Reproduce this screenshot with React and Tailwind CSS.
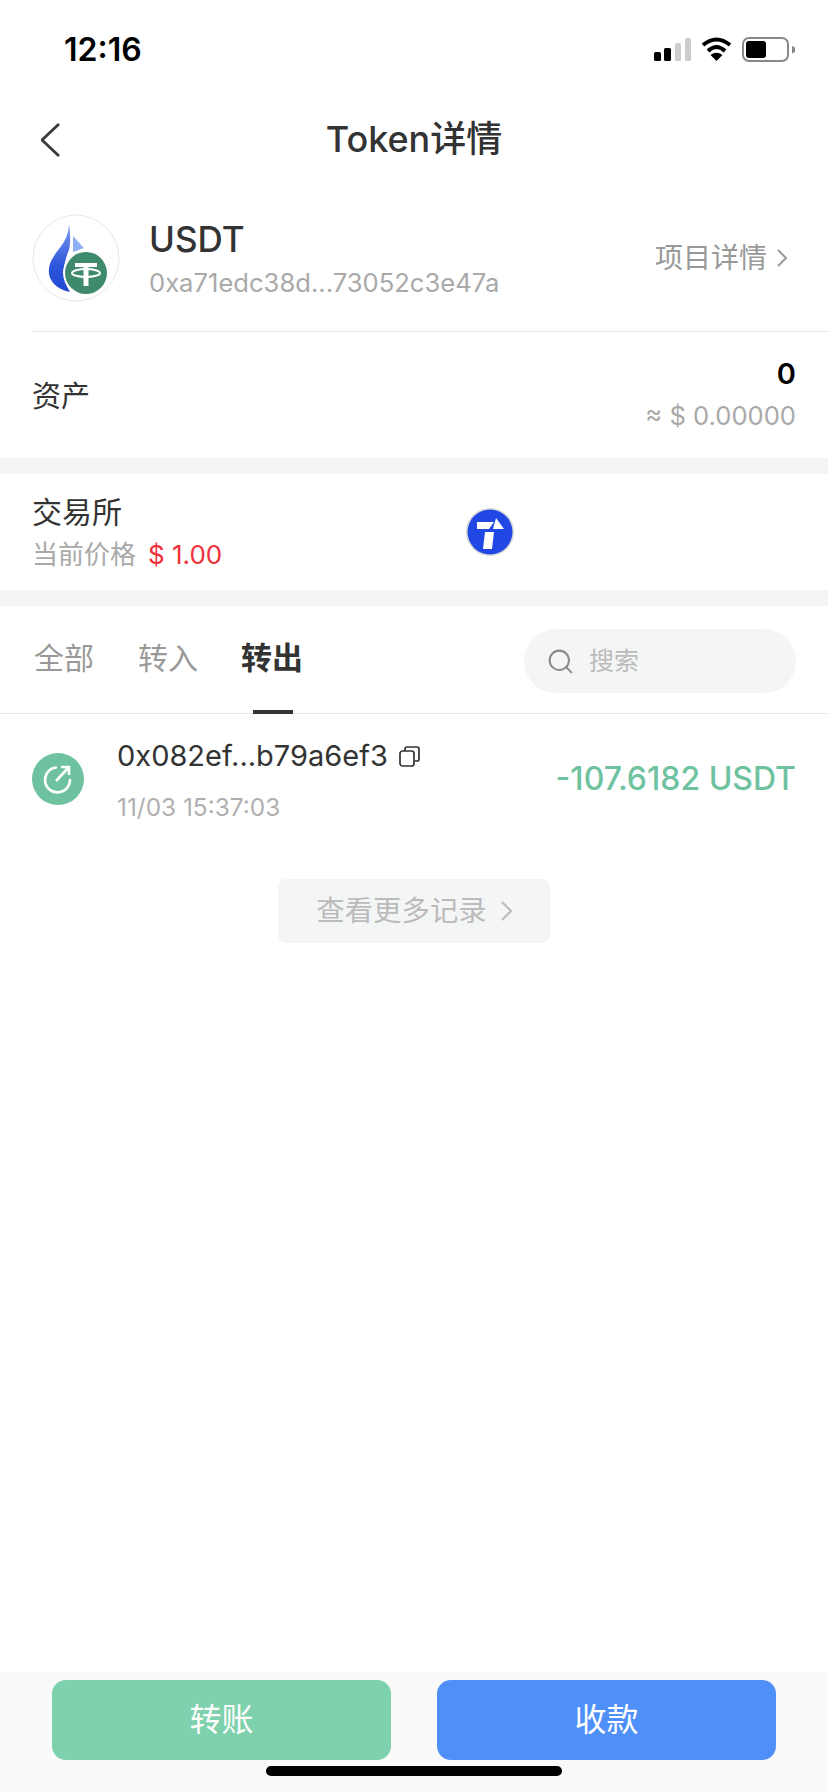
import { Search } from 'lucide-react';

const font = { fontFamily: 'Inter, "Noto Sans CJK SC", sans-serif' };

const Chevron = ({ w, h, color, stroke, flip, className }) => (
    <svg width={w} height={h} viewBox={`0 0 ${w} ${h}`} className={className}>
        <path
            d={flip
                ? `M${w - 1} 1 L1 ${h / 2} L${w - 1} ${h - 1}`
                : `M1 1 L${w - 1} ${h / 2} L1 ${h - 1}`}
            fill="none"
            stroke={color}
            strokeWidth={stroke}
        />
    </svg>
);

const StatusIcons = () => (
    <svg width="141" height="26" viewBox="0 0 141 26" className="mt-[37px]">
        {/* signal */}
        <rect x="0" y="15" width="7" height="9" rx="1.5" fill="#000" />
        <rect x="10" y="11" width="7" height="13" rx="1.5" fill="#000" />
        <rect x="21" y="6" width="6" height="18" rx="1.5" fill="#ccc" />
        <rect x="31" y="1" width="6" height="23" rx="1.5" fill="#ccc" />
        {/* wifi */}
        <path d="M49 8 Q62.5 -3 76 8" fill="none" stroke="#000" strokeWidth="4" />
        <path d="M54 14 Q62.5 6 71 14" fill="none" stroke="#000" strokeWidth="4" />
        <path d="M56.5 18 Q62.5 13.5 68.5 18 L62.5 24 Z" fill="#000" />
        {/* battery */}
        <rect x="89" y="1" width="45" height="23" rx="6" fill="none" stroke="#888" strokeWidth="2" />
        <rect x="92" y="4" width="20" height="17" rx="3" fill="#000" />
        <path d="M138 9 L141 10.5 V15 L138 16.5 Z" fill="#888" />
    </svg>
);

const TokenLogo = () => (
    <svg width="88" height="88" viewBox="0 0 88 88" className="shrink-0">
        <defs>
            <linearGradient id="drop" x1="0" y1="0" x2="0" y2="1">
                <stop offset="0" stopColor="#7d9cf0" />
                <stop offset="0.6" stopColor="#2f57dc" />
                <stop offset="1" stopColor="#1f47d0" />
            </linearGradient>
        </defs>
        <circle cx="44" cy="44" r="43" fill="#fff" stroke="#e8e8e8" strokeWidth="1" />
        <path d="M37 10 C36 26 30 30 22 42 C11 58 18 74 38 78 C30 66 30 52 37 36 C39 28 38 18 37 10 Z" fill="url(#drop)" />
        <path d="M41 22 L52 34 L41 38 Z" fill="#8fb0f2" />
        <circle cx="54" cy="59" r="23" fill="#fff" />
        <circle cx="54" cy="59" r="21" fill="#3f8a6c" />
        <path d="M43 49 H65 V53 H56.5 V72 H51.5 V53 H43 Z" fill="#fff" />
        <ellipse cx="54" cy="59" rx="14" ry="4" fill="none" stroke="#fff" strokeWidth="2" />
    </svg>
);

const ExchangeIcon = () => (
    <svg width="48" height="48" viewBox="0 0 48 48" className="shrink-0">
        <circle cx="24" cy="24" r="24" fill="#d8d8d8" />
        <circle cx="24" cy="24" r="22.5" fill="#2148e4" />
        <path d="M11 14 H28 L23 21 H11 Z M30 10 L38 21 H27 Z M19 24 H28 L26 41 H17 Z" fill="#fff" />
    </svg>
);

const SendIcon = () => (
    <svg width="52" height="52" viewBox="0 0 52 52" className="shrink-0">
        <circle cx="26" cy="26" r="26" fill="#6fc2a0" />
        <path d="M24 14.5 A12.5 12.5 0 1 0 38 27" fill="none" stroke="#fff" strokeWidth="2.6" strokeLinecap="round" />
        <path d="M24 28 L36 15 M29 14 H37 V22" fill="none" stroke="#fff" strokeWidth="2.6" />
    </svg>
);

const CopyIcon = () => (
    <svg width="21" height="21" viewBox="0 0 21 21" className="shrink-0">
        <rect x="1" y="5" width="14" height="15" rx="2.5" fill="none" stroke="#333" strokeWidth="1.7" />
        <path d="M6 5 V3 A2 2 0 0 1 8 1 H18 A2 2 0 0 1 20 3 V13 A2 2 0 0 1 18 15 H15" fill="none" stroke="#333" strokeWidth="1.7" />
    </svg>
);

export default function App() {
    return (
        <div style={font} className="w-[828px] h-[1792px] bg-white flex flex-col overflow-hidden">

            {/* Status bar */}
            <div className="h-[100px] shrink-0 flex justify-between pl-[64px] pr-[33px]">
                <span className="mt-[30px] text-[32px] leading-[40px] font-semibold text-black">12:16</span>
                <StatusIcons />
            </div>

            {/* Nav */}
            <div className="relative h-[78px] shrink-0 flex items-center justify-center">
                <Chevron className="absolute left-[41px] top-[23px]" w={19} h={34} color="#3a3a3a" stroke={2.8} flip />
                <span className="text-[36px] leading-[48px] font-medium text-[#333]">Token详情</span>
            </div>

            {/* Token info */}
            <div className="h-[153px] shrink-0 pl-[32px] pr-[41px] pt-[36px] flex items-start">
                <TokenLogo />
                <div className="ml-[29px] flex-1 flex flex-col">
                    <span className="mt-[3px] text-[35px] leading-[44px] font-medium text-[#333]">USDT</span>
                    <span className="mt-[6px] text-[25.6px] leading-[32px] text-[#a9a9a9]">0xa71edc38d...73052c3e47a</span>
                </div>
                <div className="mt-[24px] flex items-center text-[28px] leading-[40px] text-[#999]">
                    项目详情
                    <Chevron className="ml-[10px]" w={10} h={18} color="#999" stroke={2} />
                </div>
            </div>
            <div className="ml-[32px] h-[1px] shrink-0 bg-[#e6e6e6]" />

            {/* Assets */}
            <div className="h-[126px] shrink-0 pl-[32px] pr-[32px] flex items-center justify-between">
                <span className="mt-[4px] text-[29px] leading-[40px] text-[#333]">资产</span>
                <div className="flex flex-col items-end">
                    <span className="text-[29px] leading-[36px] font-semibold text-black">0</span>
                    <span className="mt-[6px] text-[25.6px] leading-[36px] text-[#a9a9a9]">≈ $ 0.00000</span>
                </div>
            </div>
            <div className="h-[16px] shrink-0 bg-[#f5f5f5]" />

            {/* Exchange */}
            <div className="h-[116px] shrink-0 pl-[32px] flex items-center">
                <div className="w-[434px] flex flex-col">
                    <span className="text-[30px] leading-[40px] text-[#333]">交易所</span>
                    <div className="mt-[5px] flex text-[26px] leading-[36px]">
                        <span className="text-[#a9a9a9]">当前价格</span>
                        <span className="ml-[12px] text-[#f0303c]">$ 1.00</span>
                    </div>
                </div>
                <ExchangeIcon />
            </div>
            <div className="h-[16px] shrink-0 bg-[#f5f5f5]" />

            {/* Tabs + search */}
            <div className="h-[108px] shrink-0 border-b border-[#e8e8e8] pl-[34px] pr-[32px] flex items-start">
                <span className="mt-[32px] w-[104px] text-[30px] leading-[40px] text-[#999]">全部</span>
                <span className="mt-[32px] w-[103px] text-[30px] leading-[40px] text-[#999]">转入</span>
                <div className="relative mt-[32px] w-[283px] h-[75px]">
                    <span className="text-[31px] leading-[40px] font-semibold text-[#333]">转出</span>
                    <div className="absolute left-[12px] bottom-[-1px] w-[40px] h-[4px] bg-[#333]" />
                </div>
                <div className="mt-[23px] w-[272px] h-[64px] rounded-full bg-[#f4f6f5] pl-[22px] flex items-center">
                    <Search size={29} strokeWidth={1.7} color="#8a8a8a" />
                    <span className="ml-[14px] text-[25px] leading-[34px] text-[#bbb]">搜索</span>
                </div>
            </div>

            {/* Record */}
            <div className="h-[117px] shrink-0 pl-[32px] pr-[32px] pt-[13px] flex items-center">
                <SendIcon />
                <div className="ml-[33px] flex-1 flex flex-col">
                    <div className="flex items-center">
                        <span className="text-[29px] leading-[40px] text-[#333]">0x082ef...b79a6ef3</span>
                        <span className="ml-[11px]"><CopyIcon /></span>
                    </div>
                    <span className="mt-[16px] text-[24.4px] leading-[30px] text-[#b0b0b0]">11/03 15:37:03</span>
                </div>
                <span className="text-[32px] leading-[40px] font-medium text-[#6fc2a0]">-107.6182 USDT</span>
            </div>

            {/* More */}
            <div className="flex-1 pt-[48px] flex justify-center items-start">
                <div className="w-[272px] h-[64px] rounded-[8px] bg-[#f4f6f5] flex items-center justify-center text-[28.4px] leading-[40px] text-[#bbb]">
                    查看更多记录
                    <Chevron className="ml-[14px]" w={11} h={20} color="#bbb" stroke={2} />
                </div>
            </div>

            {/* Footer */}
            <div className="h-[120px] shrink-0 bg-[#fafafa] pt-[8px] flex flex-col items-center">
                <div className="w-[724px] flex justify-between">
                    <div className="w-[339px] h-[80px] rounded-[14px] bg-[#7dd1ac] flex items-center justify-center text-[32px] text-white">转账</div>
                    <div className="w-[339px] h-[80px] rounded-[14px] bg-[#4f8ff8] flex items-center justify-center text-[32px] text-white">收款</div>
                </div>
                <div className="mt-[6px] w-[296px] h-[10px] rounded-full bg-black" />
            </div>
        </div>
    );
}
